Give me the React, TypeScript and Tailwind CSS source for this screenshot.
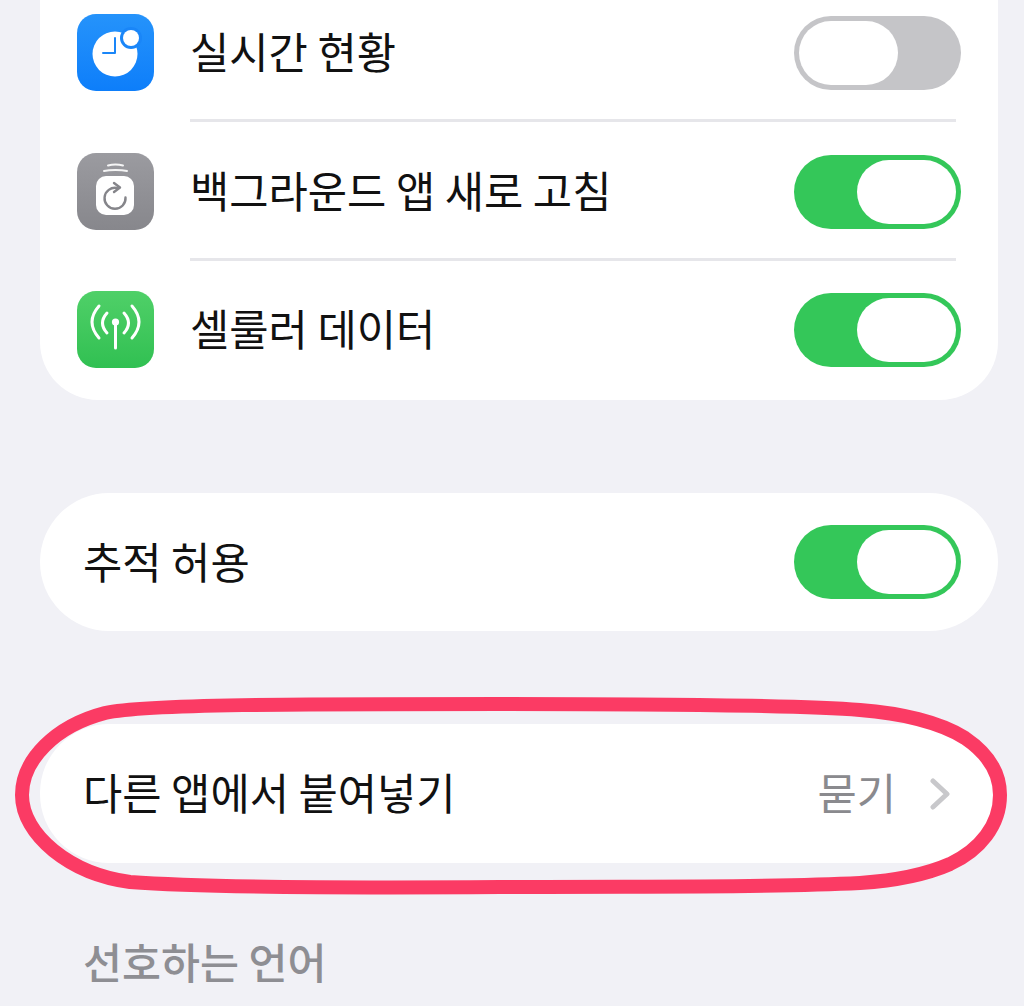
import React from "react";

const font = "font-['Noto_Sans_CJK_KR','Noto_Sans',sans-serif]";

function Toggle({ on }: { on: boolean }) {
  return (
    <div
      className={`flex h-[74px] w-[167px] shrink-0 rounded-full p-[5px] ${
        on ? "justify-end bg-[#34c759]" : "justify-start bg-[#c5c5c8]"
      }`}
    >
      <div className="h-[64px] w-[99px] rounded-full bg-white" />
    </div>
  );
}

function LiveIcon() {
  return (
    <div className="h-[77px] w-[77px] shrink-0 rounded-[19px] bg-gradient-to-b from-[#2593fb] to-[#0d7efa]">
      <svg viewBox="0 0 77 77" className="h-[77px] w-[77px]">
        <circle cx="38" cy="40" r="22.500" fill="#fff" />
        <path d="M38 24v15H26" fill="none" stroke="#1a86f8" strokeWidth="2" strokeLinecap="round" strokeLinejoin="round" />
        <circle cx="54" cy="24" r="11" fill="#1a86f8" />
        <circle cx="54" cy="24" r="8" fill="#fff" />
      </svg>
    </div>
  );
}

function RefreshIcon() {
  return (
    <div className="h-[77px] w-[77px] shrink-0 rounded-[19px] bg-gradient-to-b from-[#9b9ba0] to-[#87878c]">
      <svg viewBox="0 0 77 77" className="h-[77px] w-[77px]">
        <path d="M31 12.500c4-1 11-1 15 0" fill="none" stroke="#fff" strokeWidth="2" strokeLinecap="round" opacity="0.9" />
        <path d="M27 18c6-1.500 17-1.500 23 0" fill="none" stroke="#fff" strokeWidth="2" strokeLinecap="round" opacity="0.9" />
        <rect x="19" y="23" width="38" height="39" rx="10" fill="#fff" />
        <path d="M40 35a10.500 10.500 0 1 0 8.500 9.500" fill="none" stroke="#85858a" strokeWidth="2.400" strokeLinecap="round" />
        <path d="M37 30l6 4.500-6 4.500" fill="none" stroke="#85858a" strokeWidth="2.400" strokeLinecap="round" strokeLinejoin="round" />
      </svg>
    </div>
  );
}

function CellularIcon() {
  return (
    <div className="h-[77px] w-[77px] shrink-0 rounded-[19px] bg-gradient-to-b from-[#4fd068] to-[#30c052]">
      <svg viewBox="0 0 77 77" className="h-[77px] w-[77px]" fill="none" stroke="#fff" strokeLinecap="round">
        <circle cx="38.500" cy="31" r="3.600" fill="#fff" stroke="none" />
        <path d="M38.500 32v25" strokeWidth="3" />
        <path d="M30 22Q21 32 30 42" strokeWidth="3" />
        <path d="M47 22Q56 32 47 42" strokeWidth="3" />
        <path d="M22 15Q8 31 22 47" strokeWidth="3" />
        <path d="M55 15Q69 31 55 47" strokeWidth="3" />
      </svg>
    </div>
  );
}

function IconRow({ icon, label, on, divider }: { icon: React.ReactNode; label: string; on: boolean; divider?: boolean }) {
  return (
    <div className={`flex items-center pl-[37px] pt-[4px] ${divider ? "pb-[3px]" : ""}`}>
      <div className={divider ? "mb-[2px]" : "mb-[1px]"}>{icon}</div>
      <div className={`relative ml-[36px] mr-[42px] flex flex-1 items-center ${divider ? "h-[132px]" : "h-[130px]"}`}>
        <span className="flex-1 pb-[6px] text-[42.700px] text-[#111]">{label}</span>
        <div className="-mr-[5px]">
          <Toggle on={on} />
        </div>
        {divider && <div className="absolute inset-x-0 -bottom-[3px] h-[3px] bg-[#e6e6ea]" />}
      </div>
    </div>
  );
}

export default function App() {
  return (
    <div className={`relative h-[1006px] w-[1024px] overflow-hidden bg-[#f1f1f6] pl-[40px] pr-[26px] ${font}`}>
      <div className="-mt-[17px] h-[417px] overflow-hidden rounded-b-[58px] bg-white">
        <IconRow icon={<LiveIcon />} label="실시간 현황" on={false} divider />
        <IconRow icon={<RefreshIcon />} label="백그라운드 앱 새로 고침" on divider />
        <IconRow icon={<CellularIcon />} label="셀룰러 데이터" on />
      </div>

      <div className="mt-[93px] flex h-[138px] items-center rounded-[69px] bg-white pl-[43px] pr-[37px]">
        <span className="flex-1 pb-[4px] text-[42.700px] text-[#111]">추적 허용</span>
        <Toggle on />
      </div>

      <div className="mt-[93px] flex h-[139px] items-center rounded-[69px] bg-white pl-[43px] pr-[48px]">
        <span className="flex-1 pb-[4px] text-[42.700px] text-[#111]">다른 앱에서 붙여넣기</span>
        <span className="pb-[4px] text-[42.700px] text-[#8a8a8e]">묻기</span>
        <svg viewBox="0 0 20 32" className="ml-[34px] h-[32px] w-[20px]" fill="none" stroke="#c8c8cb" strokeWidth="5" strokeLinecap="round" strokeLinejoin="round">
          <path d="M3 3l14 13L3 29" />
        </svg>
      </div>

      <div className="mt-[68px] pl-[43px] text-[42.400px] font-medium leading-[60px] text-[#8e8e93]">선호하는 언어</div>

      {/* hand drawn highlight around the paste row */}
      <svg className="absolute top-0 left-0 h-[1006px] w-[1024px]" viewBox="0 0 1024 1006" fill="none">
        <path
          d="M22 795C22 760 55 726 105 713C145 704 300 704 500 704C650 704 800 705 860 710C900 713 940 722 965 738C990 755 1000 775 1000 795C1000 825 980 850 950 864C925 875 890 881 860 883C760 888 650 886 500 887C350 888 210 888 130 882C70 874 22 835 22 795Z"
          stroke="#fb3b64"
          strokeWidth="14"
        />
      </svg>
    </div>
  );
}
